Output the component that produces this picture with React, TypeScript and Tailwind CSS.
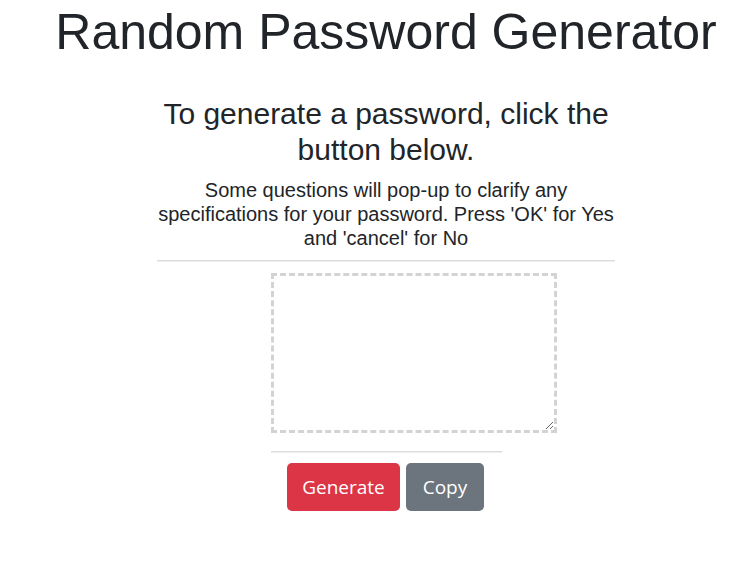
const sans = "font-['Liberation_Sans',Arial,sans-serif]";

export default function App() {
  return (
    <div className={`min-h-screen bg-white pl-[25px] text-[#212529] ${sans}`}>
      <div className="flex flex-col items-center">
        <h1 className="pt-[2px] text-[50px] leading-[60px] font-normal">Random Password Generator</h1>

        <div className="mt-[34px] flex w-[458px] flex-col">
          <h2 className="text-center text-[30px] leading-[36px] font-normal">
            To generate a password, click the
            <br />
            button below.
          </h2>
          <p className="mt-[10px] text-center text-[20px] leading-[24px]">
            Some questions will pop-up to clarify any
            <br />
            specifications for your password. Press 'OK' for Yes
            <br />
            and 'cancel' for No
          </p>

          <hr className="mt-[10px] h-[2px] border-0 border-t border-b border-t-[#dcdcdc] border-b-[#eeeeee]" />

          <div className="ml-[114px] mt-[11px] flex flex-col items-start">
            <textarea
              className="block h-[160px] w-[286px] border-[3px] border-dashed border-[#d3d3d3] bg-white outline-none"
              aria-label="Generated password"
            />
            <hr className="mt-[18px] h-[2px] w-[231px] border-0 border-t border-b border-t-[#dcdcdc] border-b-[#eeeeee]" />

            <div className="ml-[16px] mt-[10px] flex gap-[6px] font-['Open_Sans','Noto_Sans',sans-serif] text-[19px] text-white">
              <button
                type="button"
                className="flex h-[48px] w-[113px] items-center justify-center rounded-[5px] bg-[#dc3545]"
              >
                Generate
              </button>
              <button
                type="button"
                className="flex h-[48px] w-[78px] items-center justify-center rounded-[5px] bg-[#6c757d]"
              >
                Copy
              </button>
            </div>
          </div>
        </div>
      </div>
    </div>
  );
}
